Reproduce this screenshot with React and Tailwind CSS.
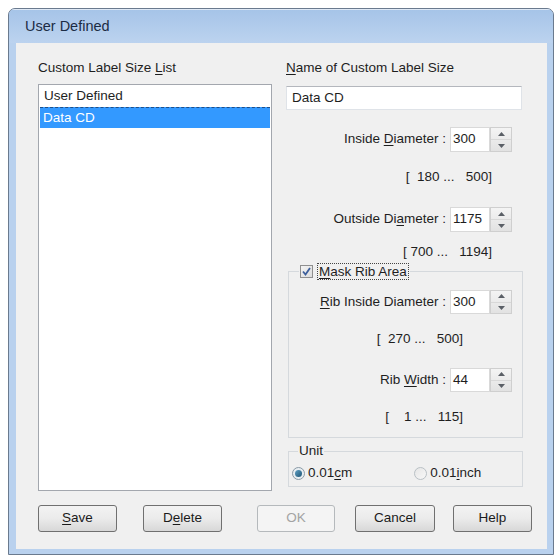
import React from "react";

const F = { fontFamily: '"Liberation Sans", Arial, sans-serif' };

function U({ children }) {
  return <span className="underline underline-offset-2 decoration-1">{children}</span>;
}

function Spinner() {
  return (
    <div className="w-[22px] h-full flex flex-col border border-[#cfcfcf] bg-gradient-to-b from-[#f4f4f4] to-[#e2e2e2]">
      <div className="flex-1 flex items-center justify-center border-b border-[#d8d8d8]">
        <svg width="7" height="4" viewBox="0 0 7 4"><path d="M0 4 L3.5 0 L7 4 Z" fill="#5a5f66" /></svg>
      </div>
      <div className="flex-1 flex items-center justify-center">
        <svg width="7" height="4" viewBox="0 0 7 4"><path d="M0 0 L3.5 4 L7 0 Z" fill="#5a5f66" /></svg>
      </div>
    </div>
  );
}

function SpinRow({ label, value, h = "h-[25px]", mt, pr }) {
  return (
    <div className={`flex justify-end items-stretch ${h} ${mt} ${pr}`}>
      <div className="flex items-center mr-[4px] whitespace-nowrap">{label}</div>
      <div className="w-[40px] bg-white border border-[#d9d9d9] flex items-center pl-[2px]">{value}</div>
      <Spinner />
    </div>
  );
}

function Range({ text, mt, pr, h = "h-[17px]" }) {
  return (
    <div className={`flex justify-end items-center ${h} ${mt} ${pr} whitespace-pre`}>{text}</div>
  );
}

function Btn({ children, className = "", disabled }) {
  return (
    <div
      className={`h-[27px] rounded-[3px] border flex items-center justify-center ${
        disabled
          ? "border-[#b5b9bc] bg-[#f4f4f4] text-[#a3a3a3]"
          : "border-[#707070] bg-gradient-to-b from-[#f3f3f3] via-[#ebebeb] to-[#d8d8d8] text-[#1b1b1b]"
      } ${className}`}
    >
      {children}
    </div>
  );
}

export default function App() {
  return (
    <div className="w-[559px] h-[559px] bg-white pt-[8px] pl-[8px] text-[13.5px] text-[#1e1e1e]" style={F}>
      <div className="w-[546px] h-[547px] rounded-t-[7px] border border-[#6a7a8e] bg-[#b9d1ee] flex flex-col overflow-hidden">
        <div className="h-[34px] shrink-0 flex items-center pl-[16px] bg-gradient-to-b from-[#a6c4e8] to-[#bcd3ef] border-t border-[#dfe9f6] text-[14.5px] text-[#1c2c44]">
          User Defined
        </div>
        <div className="flex-1 ml-[7px] mr-[6px] mb-[5px] bg-[#f0f0f0] flex flex-col">
          <div className="flex pt-[16px] pl-[22px]">
            {/* Left column */}
            <div className="w-[234px] flex flex-col">
              <div className="h-[17px] leading-[17px]">Custom Label Size <U>L</U>ist</div>
              <div className="mt-[8px] h-[407px] bg-white border border-[#a3a7ae] pt-[1px] px-[1px]">
                <div className="h-[21px] flex items-center pl-[4px]">User Defined</div>
                <div className="h-[21px] flex items-center pl-[3px] bg-[#3399ff] text-white border-t border-dashed border-[#1d4f88]">Data CD</div>
              </div>
            </div>
            {/* Right column */}
            <div className="w-[237px] ml-[14px] flex flex-col">
              <div className="h-[17px] leading-[17px]"><U>N</U>ame of Custom Label Size</div>
              <div className="mt-[10px] h-[24px] w-[236px] bg-white border border-[#dfe3e8] border-t-[#b4b7bd] flex items-center pl-[5px]">Data CD</div>
              <SpinRow label={<span>Inside <U>D</U>iameter :</span>} value="300" mt="mt-[17px]" pr="pr-[11px]" />
              <Range text="[  180 ...   500]" mt="mt-[16px]" pr="pr-[31px]" h="h-[18px]" />
              <SpinRow label={<span>Outside Di<U>a</U>meter :</span>} value="1175" mt="mt-[21px]" pr="pr-[11px]" />
              <Range text="[ 700 ...   1194]" mt="mt-[12px]" pr="pr-[31px]" />
              <fieldset className="ml-[2px] w-[235px] border border-[#d5d9dd] px-0 pb-[11px]">
                <legend className="ml-[10px] h-[20px] flex items-center px-[1px]">
                  <span className="w-[13px] h-[13px] border border-[#8f8f8f] bg-gradient-to-br from-[#f4f4f4] to-[#dcdcdc] flex items-center justify-center">
                    <svg width="9" height="9" viewBox="0 0 9 9"><path d="M1 4.5 L3.5 7.5 L8 1" stroke="#3d5f9c" strokeWidth="1.8" fill="none" /></svg>
                  </span>
                  <span className="ml-[4px] px-[1px] border border-dotted border-[#444] leading-[15px]"><U>M</U>ask Rib Area</span>
                </legend>
                <SpinRow label={<span><U>R</U>ib Inside Diameter :</span>} value="300" h="h-[24px]" mt="mt-[9px]" pr="pr-[10px]" />
                <Range text="[  270 ...   500]" mt="mt-[17px]" pr="pr-[59px]" />
                <SpinRow label={<span>Rib <U>W</U>idth :</span>} value="44" h="h-[24px]" mt="mt-[20px]" pr="pr-[10px]" />
                <Range text="[    1 ...   115]" mt="mt-[17px]" pr="pr-[59px]" />
              </fieldset>
              <fieldset className="mt-[5px] ml-[2px] w-[235px] border border-[#d5d9dd] px-0 pb-[5px]">
                <legend className="ml-[9px] h-[16px] leading-[16px] px-[1px]">Unit</legend>
                <div className="mt-[6px] h-[16px] flex items-center">
                  <div className="ml-[3px] w-[13px] h-[13px] rounded-full border border-[#8a9aa6] bg-[#e8eef2] flex items-center justify-center">
                    <div className="w-[7px] h-[7px] rounded-full bg-gradient-to-br from-[#5fa0c4] to-[#1d5575]" />
                  </div>
                  <span className="ml-[3px]">0.01<U>c</U>m</span>
                  <div className="ml-[62px] w-[13px] h-[13px] rounded-full border border-[#b9c0c5] bg-gradient-to-br from-[#e6e6e6] to-[#f8f8f8]" />
                  <span className="ml-[3px]">0.01<U>i</U>nch</span>
                </div>
              </fieldset>
            </div>
          </div>
          <div className="flex mt-[14px] pl-[22px]">
            <Btn className="w-[79px]"><span><U>S</U>ave</span></Btn>
            <Btn className="w-[79px] ml-[26px]"><span>D<U>e</U>lete</span></Btn>
            <Btn className="w-[78px] ml-[35px]" disabled>OK</Btn>
            <Btn className="w-[80px] ml-[20px]">Cancel</Btn>
            <Btn className="w-[79px] ml-[18px]">Help</Btn>
          </div>
        </div>
      </div>
    </div>
  );
}
